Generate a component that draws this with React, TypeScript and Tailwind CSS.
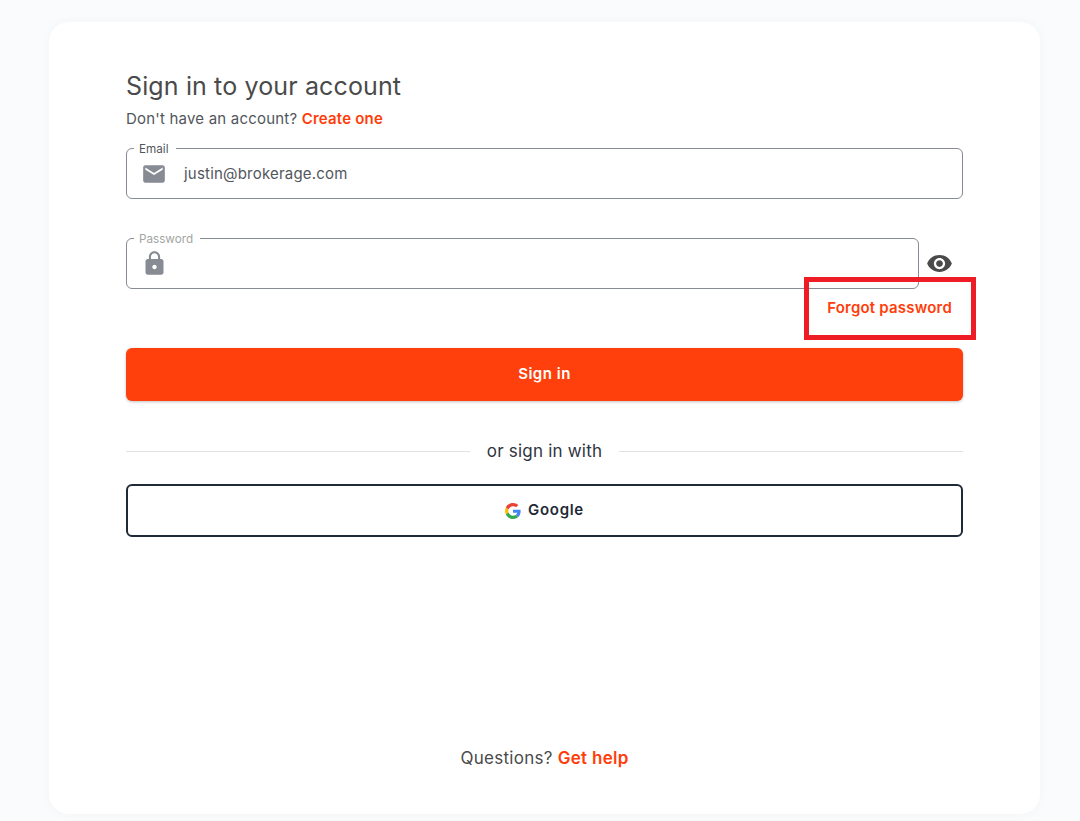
import { MdEmail, MdLock, MdVisibility } from "react-icons/md";

function GoogleLogo() {
  return (
    <svg viewBox="0 0 48 48" className="h-[16px] w-[16px]">
      <path fill="#EA4335" d="M24 9.5c3.5 0 6.700 1.200 9.200 3.600l6.900-6.900C35.900 2.400 30.500 0 24 0 14.600 0 6.500 5.400 2.600 13.200l8 6.200C12.500 13.600 17.800 9.500 24 9.500z" />
      <path fill="#4285F4" d="M46.900 24.500c0-1.600-.1-3.100-.4-4.500H24v9h12.900c-.6 3-2.200 5.500-4.800 7.200l7.700 6c4.500-4.200 7.100-10.300 7.100-17.700z" />
      <path fill="#FBBC05" d="M10.500 28.600c-.5-1.400-.8-3-.8-4.600s.3-3.200.8-4.600l-8-6.200C.9 16.500 0 20.100 0 24s.9 7.500 2.600 10.800l7.900-6.200z" />
      <path fill="#34A853" d="M24 48c6.500 0 11.900-2.100 15.900-5.800l-7.700-6c-2.200 1.500-4.900 2.300-8.100 2.300-6.300 0-11.600-4.200-13.500-9.900l-8 6.200C6.500 42.600 14.600 48 24 48z" />
    </svg>
  );
}

export default function App() {
  return (
    <div className="h-[821px] overflow-hidden bg-[#fafbfd] pt-[22px] pl-[49px] font-['Inter',sans-serif]">
      {/* Card */}
      <div className="relative flex h-[792px] w-[991px] flex-col rounded-[20px] bg-white px-[77px] pt-[50px] shadow-[0_0_12px_rgba(20,30,60,0.03)]">
        <h1 className="text-[25px] leading-[29px] font-normal tracking-[0.13px] text-[#4a4a4a]">Sign in to your account</h1>
        <p className="mt-[9px] text-[15px] leading-[17px] tracking-[0.2px] text-[#52565c]">
          Don't have an account? <a className="font-semibold text-[#ff3d0a]">Create one</a>
        </p>

        {/* Email */}
        <div className="relative mt-[21px] flex h-[51px] w-[837px] items-center rounded-[6px] border border-[#868b94] pl-[14px]">
          <span className="absolute -top-[6px] left-[7px] bg-white pr-[7px] pl-[5px] text-[11.7px] leading-[13px] text-[#52565c]">Email</span>
          <MdEmail className="h-[26px] w-[26px] text-[#868b94]" />
          <span className="ml-[17px] pt-[2px] text-[15px] tracking-[0.2px] text-[#52565c]">justin@brokerage.com</span>
        </div>

        {/* Password */}
        <div className="mt-[39px] flex items-center">
          <div className="relative flex h-[51px] w-[793px] items-center rounded-[6px] border border-[#868b94] pl-[14px]">
            <span className="absolute -top-[6px] left-[7px] bg-white pr-[7px] pl-[5px] text-[11.7px] leading-[13px] text-[#a3a6a3]">Password</span>
            <MdLock className="h-[27px] w-[27px] text-[#868b94]" />
          </div>
          <MdVisibility className="ml-[7px] h-[27px] w-[27px] text-[#4a4a4a]" />
        </div>

        <div className="mt-[10px] flex justify-end pr-[11px]">
          <a className="text-[15px] leading-[17px] font-semibold tracking-[0.2px] text-[#ff3d0a]">Forgot password</a>
        </div>

        <button className="mt-[32px] h-[53px] w-[837px] rounded-[6px] bg-[#ff3f0c] text-[15px] font-semibold tracking-[0.5px] text-white shadow-[0_1px_3px_rgba(0,0,0,0.25)]">
          Sign in
        </button>

        {/* Divider */}
        <div className="mt-[41px] flex w-[837px] items-center">
          <div className="h-px flex-1 bg-[#e2e2e2]" />
          <span className="px-[17px] text-[17px] leading-[19px] tracking-[0.2px] text-[#2f3542]">or sign in with</span>
          <div className="h-px flex-1 bg-[#e2e2e2]" />
        </div>

        <button className="mt-[23px] flex h-[53px] w-[837px] items-center justify-center gap-[7px] rounded-[6px] border-2 border-[#1f2a37] text-[15px] font-semibold tracking-[0.7px] text-[#1f2a37]">
          <GoogleLogo />
          Google
        </button>

        <p className="mt-[212px] text-center text-[17px] leading-[19px] tracking-[0.28px] text-[#4a4a4a]">
          Questions? <a className="font-semibold text-[#ff3d0a]">Get help</a>
        </p>

        {/* Annotation box drawn over the page */}
        <div className="absolute top-[255px] left-[755px] h-[63px] w-[172px] border-[5px] border-[#ee1c25]" />
      </div>
    </div>
  );
}
